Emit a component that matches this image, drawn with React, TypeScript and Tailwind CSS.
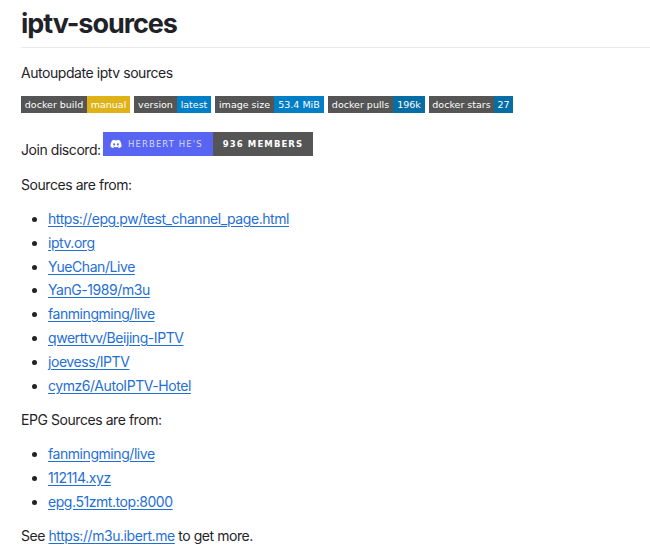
import { FaDiscord } from "react-icons/fa6";

const badges = [
  { label: "docker build", value: "manual", labelW: "w-[66px]", valueW: "w-[43px]", valueBg: "bg-[#dfb317]" },
  { label: "version", value: "latest", labelW: "w-[43px]", valueW: "w-[34px]", valueBg: "bg-[#007ec6]" },
  { label: "image size", value: "53.4 MiB", labelW: "w-[59px]", valueW: "w-[50px]", valueBg: "bg-[#007ec6]" },
  { label: "docker pulls", value: "196k", labelW: "w-[65px]", valueW: "w-[32px]", valueBg: "bg-[#066da5]" },
  { label: "docker stars", value: "27", labelW: "w-[65px]", valueW: "w-[19px]", valueBg: "bg-[#066da5]" },
];

const sources = [
  "https://epg.pw/test_channel_page.html",
  "iptv.org",
  "YueChan/Live",
  "YanG-1989/m3u",
  "fanmingming/live",
  "qwerttvv/Beijing-IPTV",
  "joevess/IPTV",
  "cymz6/AutoIPTV-Hotel",
];

const epgSources = ["fanmingming/live", "112114.xyz", "epg.51zmt.top:8000"];

function LinkList({ items, gap }: { items: string[]; gap: string }) {
  return (
    <ul className={`mt-[14px] flex list-disc flex-col ${gap} pl-[27px] marker:text-[#1f2328]`}>
      {items.map((item) => (
        <li key={item} className="h-[20px] leading-[20px]">
          <a href="#" className="text-[#1f6fd6] underline underline-offset-[2px]">
            {item}
          </a>
        </li>
      ))}
    </ul>
  );
}

export default function App() {
  return (
    <div className="h-[556px] w-[650px] overflow-hidden bg-white pl-[21px] font-['Inter','Liberation_Sans',sans-serif] text-[14px] leading-[20px] tracking-[-0.44px] text-[#1f2328]">
      <h1 className="flex h-[48px] items-end border-b border-[#e8eaec] pb-[6px] text-[27px] leading-[34px] font-bold tracking-[-1.05px]">
        iptv-sources
      </h1>
      <p className="mt-[15px]">Autoupdate iptv sources</p>

      <div className="mt-[13px] flex h-[17px] gap-[4px] font-['DejaVu_Sans',sans-serif] text-[9.5px] leading-[17px] tracking-normal text-white">
        {badges.map((b) => (
          <div key={b.label} className="flex">
            <span className={`${b.labelW} bg-[#555555] text-center`}>{b.label}</span>
            <span className={`${b.valueW} ${b.valueBg} text-center`}>{b.value}</span>
          </div>
        ))}
      </div>

      <div className="mt-[19px] flex h-[24px] items-start">
        <span className="mt-[8px] w-[82px] whitespace-nowrap">Join discord:</span>
        <div className="flex h-[24px] font-['DejaVu_Sans',sans-serif] text-[8.5px] leading-[24px] tracking-[1.1px] text-white uppercase">
          <div className="flex w-[110px] items-center gap-[6px] bg-[#5865f2] pl-[7px]">
            <FaDiscord className="h-[12px] w-[12px] shrink-0" />
            <span className="text-white/75">Herbert He's</span>
          </div>
          <div className="w-[100px] bg-[#555555] text-center font-bold">936 members</div>
        </div>
      </div>

      <p className="mt-[19px]">Sources are from:</p>
      <LinkList items={sources} gap="gap-[3.8px]" />

      <p className="mt-[14px]">EPG Sources are from:</p>
      <LinkList items={epgSources} gap="gap-[4px]" />

      <p className="mt-[14px]">
        See{" "}
        <a href="#" className="text-[#1f6fd6] underline underline-offset-[2px]">
          https://m3u.ibert.me
        </a>{" "}
        to get more.
      </p>
    </div>
  );
}
